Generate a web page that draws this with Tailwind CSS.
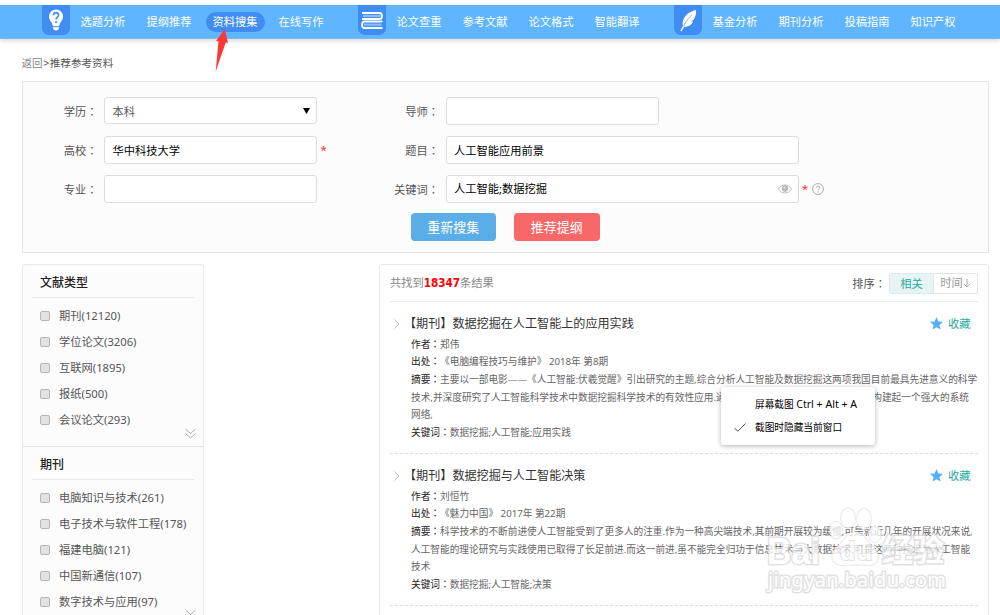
<!DOCTYPE html>
<html lang="zh-CN">
<head>
  <meta charset="UTF-8" />
  <meta name="viewport" content="width=device-width, initial-scale=1.0" />
  <title>推荐参考资料</title>
  <script src="https://cdn.jsdelivr.net/npm/@tailwindcss/browser@4"></script>
</head>

<body class="relative w-[1000px] h-[615px] overflow-hidden bg-white pt-[5px] text-[11.25px] leading-4 text-[#555] whitespace-nowrap [text-spacing-trim:space-all] font-['Noto_Sans','Noto_Sans_CJK_SC',sans-serif]">

  <!-- Barra de navegación -->
  <nav class="h-[34px] pl-[42px] flex gap-6 bg-[#5fb5ff] text-white border-b border-[#79b9ee] shadow-[0_2px_5px_rgba(0,0,0,0.15)]">
    <div class="flex shrink-0">
      <div class="w-7 h-[30px] rounded-b-[7px] bg-[#3f8cf3] flex justify-center">
        <svg class="w-7 h-[30px]" viewBox="0 0 28 30">
          <path fill="#fff" d="M14 4.500a7 7 0 0 0-7 7c0 3 1.600 4.500 2.700 6.200.7 1.100.8 3.500 1.800 3.500h5c1 0 1.100-2.400 1.800-3.500C19.400 16 21 14.500 21 11.500a7 7 0 0 0-7-7z"/>
          <path fill="none" stroke="#3f8cf3" stroke-width="1.700" d="M11.400 10.300c0-3.500 5.200-3.400 5.200-.3 0 2.100-2.600 2-2.600 4.500"/>
          <circle cx="14" cy="17" r="1.100" fill="#3f8cf3"/>
          <path fill="#fff" d="M10.700 22.300h6.600c0 2-1.400 3.200-3.300 3.200s-3.300-1.200-3.300-3.200z"/>
        </svg>
      </div>
      <div class="flex items-center">
        <a class="w-[66px] text-center">选题分析</a>
        <a class="w-[66px] text-center">提纲推荐</a>
        <a class="w-[66px] text-center"><span class="inline-block w-[59px] h-5 leading-[19px] rounded-full bg-[#3f8cf3]">资料搜集</span></a>
        <a class="w-[66px] text-center">在线写作</a>
      </div>
    </div>
    <div class="flex shrink-0">
      <div class="w-7 h-[30px] rounded-b-[7px] bg-[#3f8cf3]">
        <svg class="w-7 h-[30px]" viewBox="0 0 28 30" fill="none" stroke="#fff" stroke-width="1.800">
          <path d="M4 8h17.500c3.300 0 3.300 6 0 6H4"/>
          <path d="M5 11h17.500" stroke-width="2.200" stroke="#8dbdf9"/>
          <path d="M24.500 16.500H6.500c-3.300 0-3.300 6.500 0 6.500h18"/>
          <path d="M6 19.700h17.500" stroke-width="2.200" stroke="#8dbdf9"/>
        </svg>
      </div>
      <div class="flex items-center">
        <a class="w-[66px] text-center">论文查重</a>
        <a class="w-[66px] text-center">参考文献</a>
        <a class="w-[66px] text-center">论文格式</a>
        <a class="w-[66px] text-center">智能翻译</a>
      </div>
    </div>
    <div class="flex shrink-0">
      <div class="w-7 h-[30px] rounded-b-[7px] bg-[#3f8cf3]">
        <svg class="w-7 h-[30px]" viewBox="0 0 28 30">
          <path fill="#fff" d="M22 5c-6 1.200-11.500 5.500-13 10.500-.6 2-.5 3.800.1 5.200L6.300 25.800l1 .7 3-4.700c5 .2 7.700-2.600 8.700-5.300l-1.800.1 2.800-2.300C21.600 11.500 22.500 8 22 5z"/>
          <path fill="none" stroke="#3f8cf3" stroke-width=".6" d="M9.500 21.500c2.200-5 5-8.500 8.500-11.700"/>
        </svg>
      </div>
      <div class="flex items-center">
        <a class="w-[66px] text-center">基金分析</a>
        <a class="w-[66px] text-center">期刊分析</a>
        <a class="w-[66px] text-center">投稿指南</a>
        <a class="w-[66px] text-center">知识产权</a>
      </div>
    </div>
  </nav>

  <!-- Ruta -->
  <div class="h-[42px] pl-[21.500px] pt-[16px] text-[10.600px]"><span class="text-[#888]">返回</span><span class="mx-[.5px]">&gt;</span>推荐参考资料</div>

  <!-- Formulario -->
  <form class="ml-[22px] w-[967px] h-[172px] pt-[15px] bg-[#fcfcfc] border border-[#e6e6e6]">
    <div class="grid grid-cols-[341.5px_1fr] gap-y-[11px] -ml-[.6px]">
      <div class="flex items-center">
        <label class="w-[82px] pr-[7px] text-right">学历<span lang="zh-TW" class="font-['Noto_Sans_CJK_TC']">：</span></label>
        <div class="w-[213px] h-[27px] mb-px pl-[7px] pr-[6px] pt-[2px] flex items-center justify-between bg-white border border-[#ddd] rounded-[3px]">
          <span>本科</span>
          <svg class="w-[7px] h-[6px] mb-[2px]" viewBox="0 0 7 6"><path d="M0 0h7L3.500 6z"/></svg>
        </div>
      </div>
      <div class="flex items-center">
        <label class="w-[82px] pr-[7px] text-right">导师<span lang="zh-TW" class="font-['Noto_Sans_CJK_TC']">：</span></label>
        <div class="w-[213px] h-7 bg-white border border-[#ddd] rounded-[3px]"></div>
      </div>
      <div class="flex items-center">
        <label class="w-[82px] pr-[7px] text-right">高校<span lang="zh-TW" class="font-['Noto_Sans_CJK_TC']">：</span></label>
        <div class="w-[213px] h-7 pl-[7px] pt-px flex items-center bg-white border border-[#ddd] rounded-[3px] text-black">华中科技大学</div>
        <span class="ml-[3px] text-[#f33]">*</span>
      </div>
      <div class="flex items-center">
        <label class="w-[82px] pr-[7px] text-right">题目<span lang="zh-TW" class="font-['Noto_Sans_CJK_TC']">：</span></label>
        <div class="w-[353px] h-7 pl-[7px] pt-px flex items-center bg-white border border-[#ddd] rounded-[3px] text-black">人工智能应用前景</div>
      </div>
      <div class="flex items-center">
        <label class="w-[82px] pr-[7px] text-right">专业<span lang="zh-TW" class="font-['Noto_Sans_CJK_TC']">：</span></label>
        <div class="w-[213px] h-7 bg-white border border-[#ddd] rounded-[3px]"></div>
      </div>
      <div class="flex items-center">
        <label class="w-[82px] pr-[7px] text-right">关键词<span lang="zh-TW" class="font-['Noto_Sans_CJK_TC']">：</span></label>
        <div class="w-[353px] h-7 pl-[7px] pr-[6px] flex items-center justify-between bg-white border border-[#ddd] rounded-[3px] text-black">
          <span>人工智能;数据挖掘</span>
          <svg class="w-[14px] h-[10px] mb-px" viewBox="0 0 14 10" fill="none" stroke="#bbb">
            <path d="M.5 5C3.500-.3 10.500-.3 13.500 5 10.500 10.300 3.500 10.300.5 5z"/>
            <circle cx="7" cy="4.600" r="2.800" fill="#bbb"/>
            <circle cx="6.300" cy="3.800" r=".8" fill="#fff" stroke="none"/>
          </svg>
        </div>
        <span class="ml-[3px] text-[#f33]">*</span>
        <svg class="ml-1 w-3 h-3" viewBox="0 0 12 12" fill="none" stroke="#aaa">
          <circle cx="6" cy="6" r="5.400"/>
          <path d="M4.300 4.800c0-2.200 3.400-2.200 3.400-.1C7.700 6 6 5.900 6 7.300M6 8.300v1.100"/>
        </svg>
      </div>
    </div>
    <div class="flex gap-[18px] pl-[387.500px] pt-[10px] text-[13px] text-white text-center">
      <a class="w-[85.500px] h-7 leading-7 rounded bg-[#5aade6]">重新搜集</a>
      <a class="w-[85.500px] h-7 leading-7 rounded bg-[#f96868]">推荐提纲</a>
    </div>
  </form>

  <div class="pl-[22px] pt-[11px] flex items-start">
    <!-- Filtros -->
    <aside class="w-[182px] h-[360px] shrink-0 bg-[#fcfcfc] border border-[#e8e8e8] rounded-[3px]">
      <section class="relative h-[182px] border-b border-[#e2e2e2]">
        <h2 class="mx-[9px] h-[33px] pl-2 pt-[10px] border-b border-[#e8e8e8] text-[12px] font-medium text-[#222]">文献类型</h2>
        <ul class="pl-[17px] pt-[5px] leading-[26px] [&>li]:flex [&>li]:items-center [&>li]:gap-[9px] [&_i]:w-[10px] [&_i]:h-[10px] [&_i]:mb-px [&_i]:bg-[#e2e2e2] [&_i]:border [&_i]:border-[#b5b5b5] [&_i]:rounded-[2px]">
          <li><i></i>期刊(12120)</li>
          <li><i></i>学位论文(3206)</li>
          <li><i></i>互联网(1895)</li>
          <li><i></i>报纸(500)</li>
          <li><i></i>会议论文(293)</li>
        </ul>
        <svg class="absolute right-[7px] bottom-[7px] w-[11px] h-[11px]" viewBox="0 0 11 11" fill="none" stroke="#aaa"><path d="M.5 1l5 4.500 5-4.500M.5 5.500l5 4.500 5-4.500"/></svg>
      </section>
      <section class="relative h-[178px]">
        <h2 class="mx-[9px] h-[33px] pl-2 pt-[10px] border-b border-[#e8e8e8] text-[12px] font-medium text-[#222]">期刊</h2>
        <ul class="pl-[17px] pt-[5px] leading-[26px] [&>li]:flex [&>li]:items-center [&>li]:gap-[9px] [&_i]:w-[10px] [&_i]:h-[10px] [&_i]:mb-px [&_i]:bg-[#e2e2e2] [&_i]:border [&_i]:border-[#b5b5b5] [&_i]:rounded-[2px]">
          <li><i></i>电脑知识与技术(261)</li>
          <li><i></i>电子技术与软件工程(178)</li>
          <li><i></i>福建电脑(121)</li>
          <li><i></i>中国新通信(107)</li>
          <li><i></i>数字技术与应用(97)</li>
        </ul>
        <svg class="absolute right-[7px] top-[162px] w-[11px] h-[11px]" viewBox="0 0 11 11" fill="none" stroke="#aaa"><path d="M.5 1l5 4.500 5-4.500M.5 5.500l5 4.500 5-4.500"/></svg>
      </section>
    </aside>

    <!-- Resultados -->
    <main class="ml-[175px] w-[610px] h-[360px] shrink-0 px-[10px] bg-white border border-[#e8e8e8] rounded-[3px]">
      <div class="h-[37px] flex items-center justify-between border-b border-[#e6efef]">
        <p class="text-[#888]">共找到<b class="text-[11.600px] text-[#f00] font-['DejaVu_Sans_Condensed']">18347</b>条结果</p>
        <div class="flex items-center">
          <span class="mr-[3px]">排序<span lang="zh-TW" class="font-['Noto_Sans_CJK_TC']">：</span></span>
          <span class="w-[45px] h-[21px] leading-5 text-center bg-[#e6f4f3] border border-[#dfe9e9] rounded-l-[2px] text-[#2aa99c]">相关</span>
          <span class="w-[44px] h-[21px] flex items-center justify-center border border-l-0 border-[#e4e4e4] rounded-r-[2px] text-[#999]">时间<svg class="w-2 h-[9px]" viewBox="0 0 8 9" fill="none" stroke="#aaa"><path d="M4 0v8M1 5l3 3 3-3"/></svg></span>
        </div>
      </div>

      <article class="h-[152px] pt-[13px] border-b border-dashed border-[#ddd]">
        <div class="h-[17px] flex items-center">
          <svg class="ml-1 w-[6px] h-[10px]" viewBox="0 0 6 10" fill="none" stroke="#bbb"><path d="M.5.5L5 5 .5 9.500"/></svg>
          <h3 class="ml-1 text-[12.100px] text-[#333]">【期刊】数据挖掘在人工智能上的应用实践</h3>
          <svg class="ml-auto w-[13px] h-[13px]" viewBox="0 0 24 24" fill="#55b0f5"><path d="M12 0l3.500 8.200 8.500.7-6.500 5.700 2 8.700L12 18.700l-7.500 4.600 2-8.700L0 8.900l8.500-.7z"/></svg>
          <a class="ml-[5px] mr-[7.500px] text-[#2aa99c]">收藏</a>
        </div>
        <div class="pl-[21px] pt-[3.500px] text-[9.690px] leading-[17.700px] text-[#666] [&_b]:font-normal [&_b]:text-[#222]">
          <p><b>作者<span lang="zh-TW" class="font-['Noto_Sans_CJK_TC']">：</span></b>郑伟</p>
          <p><b>出处<span lang="zh-TW" class="font-['Noto_Sans_CJK_TC']">：</span></b>《电脑编程技巧与维护》 2018年 第8期</p>
          <p><b>摘要<span lang="zh-TW" class="font-['Noto_Sans_CJK_TC']">：</span></b>主要以一部电影——《人工智能:伏羲觉醒》引出研究的主题,综合分析人工智能及数据挖掘这两项我国目前最具先进意义的科学</p>
          <p class="flex justify-between pr-[9px]"><span>技术,并深度研究了人工智能科学技术中数据挖掘科学技术的有效性应用.通</span><span>构建起一个强大的系统</span></p>
          <p>网络,</p>
          <p><b>关键词<span lang="zh-TW" class="font-['Noto_Sans_CJK_TC']">：</span></b>数据挖掘;人工智能;应用实践</p>
        </div>
      </article>

      <article class="h-[152px] pt-[13px] border-b border-dashed border-[#ddd]">
        <div class="h-[17px] flex items-center">
          <svg class="ml-1 w-[6px] h-[10px]" viewBox="0 0 6 10" fill="none" stroke="#bbb"><path d="M.5.5L5 5 .5 9.500"/></svg>
          <h3 class="ml-1 text-[12.100px] text-[#333]">【期刊】数据挖掘与人工智能决策</h3>
          <svg class="ml-auto w-[13px] h-[13px]" viewBox="0 0 24 24" fill="#55b0f5"><path d="M12 0l3.500 8.200 8.500.7-6.500 5.700 2 8.700L12 18.700l-7.500 4.600 2-8.700L0 8.900l8.500-.7z"/></svg>
          <a class="ml-[5px] mr-[7.500px] text-[#2aa99c]">收藏</a>
        </div>
        <div class="pl-[21px] pt-[3.500px] text-[9.690px] leading-[17.700px] text-[#666] [&_b]:font-normal [&_b]:text-[#222]">
          <p><b>作者<span lang="zh-TW" class="font-['Noto_Sans_CJK_TC']">：</span></b>刘恒竹</p>
          <p><b>出处<span lang="zh-TW" class="font-['Noto_Sans_CJK_TC']">：</span></b>《魅力中国》 2017年 第22期</p>
          <p><b>摘要<span lang="zh-TW" class="font-['Noto_Sans_CJK_TC']">：</span></b>科学技术的不断前进使人工智能受到了更多人的注重.作为一种高尖端技术,其前期开展较为缓慢,可是就近几年的开展状况来说,</p>
          <p>人工智能的理论研究与实践使用已取得了长足前进.而这一前进,虽不能完全归功于信息技术与大数据技术,可是这两种技术为人工智能</p>
          <p>技术</p>
          <p><b>关键词<span lang="zh-TW" class="font-['Noto_Sans_CJK_TC']">：</span></b>数据挖掘;人工智能;决策</p>
        </div>
      </article>
    </main>
  </div>

  <!-- Flecha roja -->
  <svg class="absolute left-[212px] top-[28px] w-[18px] h-[44px]" viewBox="0 0 18 44"><path fill="#fb3737" d="M12.700 1L16 15l-2.300-.6L3.700 43.500 6.500 13.300l-2.500-.3z"/></svg>

  <!-- Menú de captura -->
  <div class="absolute left-[721px] top-[387px] w-[154px] h-[58px] pt-[6px] bg-white rounded-[3px] shadow-[0_1px_5px_rgba(0,0,0,0.3)] text-[9.690px] leading-[23px] text-black">
    <div class="pl-[34px]">屏幕截图 <span class="text-[10.600px]">Ctrl + Alt + A</span></div>
    <div class="pl-[13px] flex items-center"><svg class="w-3 h-[9px] mr-[9px]" viewBox="0 0 12 9" fill="none" stroke="#555"><path d="M.5 5l3.300 3.300L11.500.5"/></svg>截图时隐藏当前窗口</div>
  </div>

  <!-- Marca de agua -->
  <svg class="absolute left-[760px] top-[500px] w-[200px] h-[105px] opacity-75" viewBox="0 0 200 105" fill="#fff" stroke="#d8d8d8" stroke-width="3" paint-order="stroke">
    <text x="7" y="64" font-size="37" font-weight="700" textLength="53" lengthAdjust="spacingAndGlyphs" font-family="Liberation Sans">Bai</text>
    <g stroke-width="1.500">
      <ellipse cx="76" cy="30" rx="6" ry="8.500"/>
      <ellipse cx="88" cy="18" rx="7" ry="10"/>
      <ellipse cx="104" cy="19" rx="7" ry="10"/>
      <ellipse cx="115" cy="34" rx="6" ry="8"/>
      <path d="M95 32c-8 0-10 9-17 14-9 7-7 19 4 19 8 0 18-1 26 0 11 1 13-11 5-18-7-5-9-15-18-15z"/>
    </g>
    <text x="80" y="60" font-size="25" font-weight="700" textLength="32" stroke-width="2" font-family="Liberation Sans">du</text>
    <text x="122" y="61" font-size="31" font-weight="700" textLength="62" font-family="Noto Sans CJK SC">经验</text>
    <text x="8" y="87" font-size="20" textLength="178" font-family="Noto Sans">jingyan.baidu.com</text>
  </svg>

</body>
</html>
